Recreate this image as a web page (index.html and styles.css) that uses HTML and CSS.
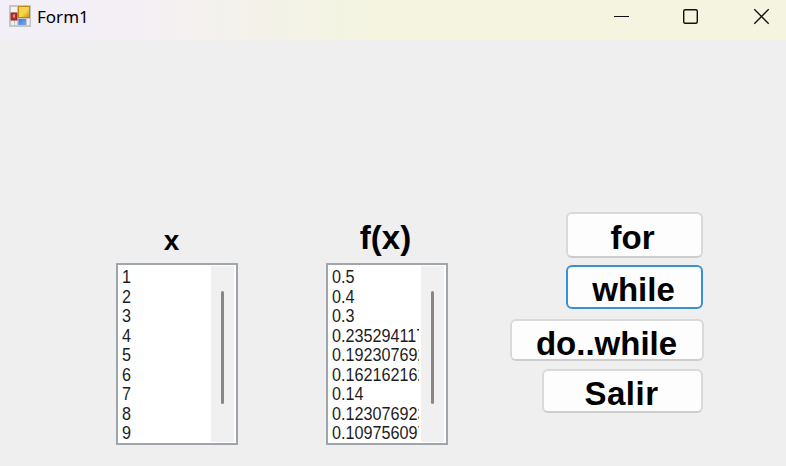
FILE: index.html
```html
<!DOCTYPE html>
<html lang="es">
<head>
<meta charset="utf-8">
<title>Form1</title>
<link rel="stylesheet" href="styles.css">
</head>
<body>
<header class="titlebar">
  <svg class="app-icon" width="22" height="22" viewBox="0 0 22 22">
    <defs>
      <linearGradient id="gold" x2="1" y2="1"><stop offset="0" stop-color="#f6cf45"/><stop offset=".55" stop-color="#fbd44b"/><stop offset="1" stop-color="#c28d08"/></linearGradient>
      <linearGradient id="blue" x2="1" y2="1"><stop offset="0" stop-color="#4379d6"/><stop offset="1" stop-color="#76a9f5"/></linearGradient>
    </defs>
    <rect width="22" height="22" fill="#c6c5c6"/>
    <rect x="2" y="2" width="6" height="5" fill="#f3f2f5"/>
    <rect x="2" y="16" width="3" height="4" fill="#eeedf0"/>
    <rect x="6" y="16" width="2" height="4" fill="#eeedf0"/>
    <rect x="18" y="14" width="2.500" height="6" fill="#f3f2f5"/>
    <rect x="9.500" y="1.500" width="11" height="11" fill="url(#gold)" stroke="#b98a10"/>
    <rect x="2" y="8" width="6" height="7" fill="#b82d25" stroke="#8f231d" stroke-width=".8"/>
    <rect x="4" y="9.500" width="2" height="3" fill="#e88a7e"/>
    <rect x="9.500" y="14" width="7.500" height="6" fill="url(#blue)"/>
  </svg>
  <span class="caption">Form1</span>
  <svg class="window-controls" width="160" height="20" viewBox="0 0 160 20" fill="none" stroke="#111">
    <path d="M4 10.500h15" />
    <rect x="73.700" y="3.700" width="13.600" height="13.600" rx="1.500" stroke-width="1.400"/>
    <path d="M144.300 3.300l14.400 14.400M158.700 3.300l-14.400 14.400" stroke-width="1.300"/>
  </svg>
</header>
<main class="form">
  <section class="column">
    <h2 class="label label-x">x</h2>
    <div class="listbox">
      <ul class="items"><li>1</li><li>2</li><li>3</li><li>4</li><li>5</li><li>6</li><li>7</li><li>8</li><li>9</li></ul>
      <div class="scrollbar"><div class="thumb"></div></div>
    </div>
  </section>
  <section class="column">
    <h2 class="label label-fx">f(x)</h2>
    <div class="listbox">
      <ul class="items"><li>0.5</li><li>0.4</li><li>0.3</li><li>0.235294117</li><li>0.192307692</li><li>0.162162162</li><li>0.14</li><li>0.123076923</li><li>0.109756097</li></ul>
      <div class="scrollbar"><div class="thumb"></div></div>
    </div>
  </section>
  <nav class="actions">
    <button class="btn btn-for">for</button>
    <button class="btn btn-while">while</button>
    <button class="btn btn-do">do..while</button>
    <button class="btn btn-exit">Salir</button>
  </nav>
</main>
</body>
</html>
```
FILE: styles.css
```css
* { box-sizing: border-box; }
body {
  margin: 0;
  height: 466px;
  overflow: hidden;
  background: #efefef;
  color: #000;
  font-family: "Liberation Sans", Arial, sans-serif;
}
.titlebar {
  display: flex;
  height: 40px;
  padding: 5px 16px 0 9px;
  background: linear-gradient(90deg, #f3eff8 0, #f4eff5 130px, #f4f1ef 200px, #f3f2e8 270px, #f4f4e0 380px, #f4f4e0 100%);
}
.caption {
  margin-left: 6px;
  font: 17px/24px "Noto Sans", sans-serif;
}
.window-controls {
  margin: 1px 0 0 auto;
}
.form {
  display: flex;
  align-items: flex-start;
  height: 426px;
  padding: 172px 0 0 116px;
}
.column {
  width: 122px;
  margin-right: 88px;
}
.label {
  display: flex;
  justify-content: center;
  height: 51px;
  margin: 0;
  font-weight: bold;
}
.label-x {
  padding: 13px 11px 0 0;
  font-size: 28px;
  line-height: 32px;
}
.label-fx {
  padding: 7px 3px 0 0;
  font-size: 33px;
  line-height: 38px;
}
.listbox {
  display: flex;
  height: 182px;
  padding: 1px;
  border: 2px solid #a0a5ac;
  background: #fff;
}
.items {
  width: 90px;
  margin: 0 2px 0 0;
  padding: 1px 0 0 3px;
  overflow: hidden;
  list-style: none;
  color: #1c1c24;
  font-size: 18.5px;
  line-height: 19.5px;
}
.items li {
  transform: scaleX(.875);
  transform-origin: left;
}
.scrollbar {
  flex: 1;
  margin-right: 1px;
  padding: 25px 0 0 10px;
  background: #f0f0f0;
}
.thumb {
  width: 3px;
  height: 113px;
  border-radius: 2px;
  background: #878787;
}
.actions {
  display: flex;
  flex-direction: column;
  align-items: flex-end;
  width: 168px;
}
.btn {
  padding: 5px 0 0;
  border: 2px solid #d9d9d9;
  border-bottom-color: #cdcdcd;
  border-radius: 6px;
  background: #fdfdfd;
  color: #000;
  font: bold 33px/36px "Liberation Sans", Arial, sans-serif;
}
.btn-for { width: 137px; height: 46px; margin-right: 1px; padding-right: 4px; }
.btn-while { width: 137px; height: 44px; margin: 7px 1px 0 0; padding-right: 2px; border-color: #3b8fd4; }
.btn-do { width: 194px; height: 42px; margin-top: 10px; padding-right: 1px; }
.btn-exit { width: 161px; height: 44px; margin: 8px 1px 0 0; padding-right: 2px; letter-spacing: .5px; }
```
